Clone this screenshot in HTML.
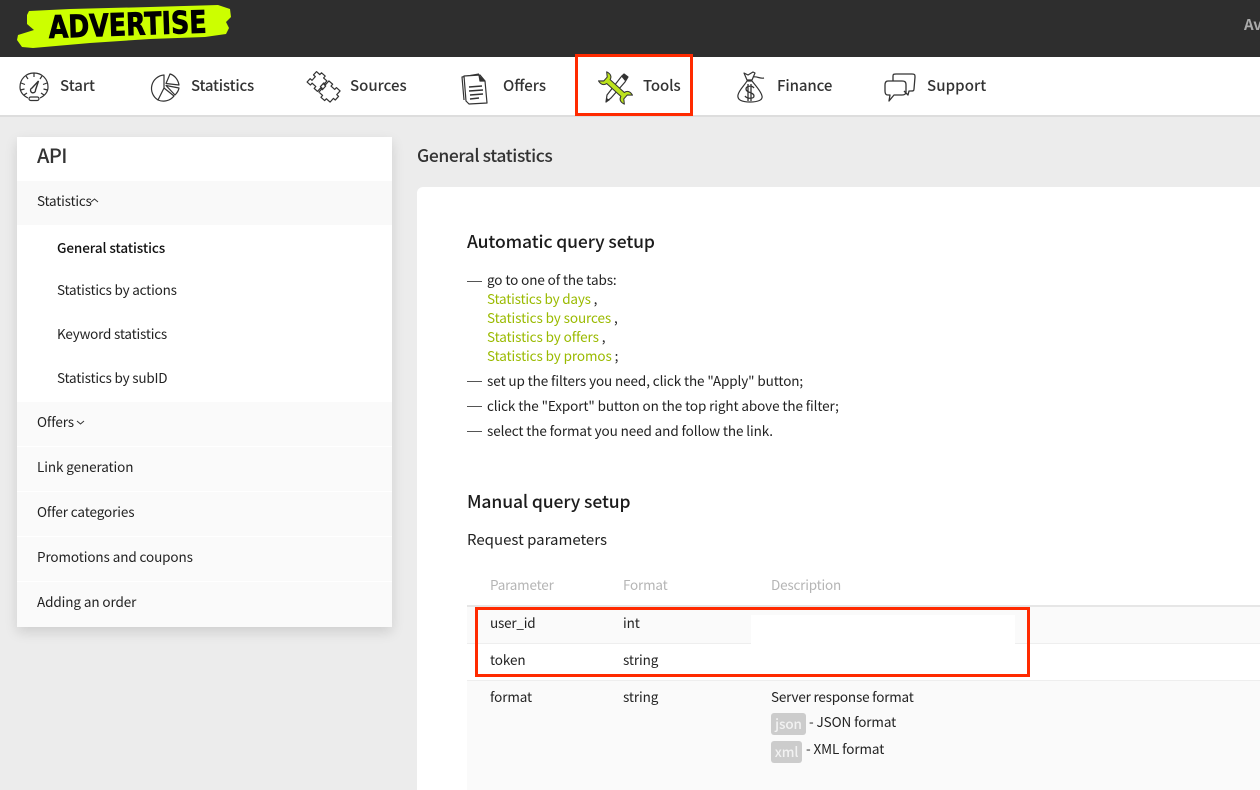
<!DOCTYPE html>
<html><head><meta charset="utf-8"><style>
html,body{margin:0;padding:0;width:1260px;height:790px;overflow:hidden;background:#ececec}
body{position:relative;font-family:"Noto Sans CJK JP","Liberation Sans",sans-serif;font-size:13.5px;letter-spacing:-.1px;color:#222}
.a{position:absolute}
.t{position:absolute;white-space:nowrap;line-height:20px;height:20px;margin-top:-1px}
.n{font-size:15px;font-weight:500;color:#333;letter-spacing:0;margin-top:0}
.g{color:#9aba00}
.h{color:#b5b5b5;letter-spacing:-.2px}
.b{font-weight:500}
.s{letter-spacing:-.2px}
.m{font-size:17.5px;letter-spacing:-.1px;color:#1c1c1c;margin-top:0}
.k{position:absolute;background:#ccc;border-radius:3px;color:#f2f2f2;font-weight:500;text-align:center;line-height:20px;height:22px}
svg{position:absolute;overflow:visible}
</style></head><body>
<div class="a" style="left:0;top:0;width:1260px;height:57px;background:#2e2e2e"></div>
<svg style="left:0;top:0" width="240" height="56" viewBox="0 0 240 56"><path d="M29 11 L70 9 L150 7 L218 5 L230 9 L231 17 L226 22 L229 28 L226 34 L205 37 L150 39 L90 43 L33 48 L22 47 L17 40 L18 35 L34 30 L27 24 L27 15 Z" fill="#ccff00"/><text x="49" y="38" font-family="'DejaVu Sans','Liberation Sans',sans-serif" font-weight="700" font-size="31" fill="#000" stroke="#000" stroke-width=".8" letter-spacing="0" textLength="158" lengthAdjust="spacingAndGlyphs" transform="rotate(-2 49 38)">ADVERTISE</text></svg>
<div class="t" style="left:1244px;top:16px;color:#aaa;font-weight:700;font-size:15px">Av</div>

<div class="a" style="left:0;top:57px;width:1260px;height:58px;background:#fff"></div>
<div class="a" style="left:0;top:115px;width:1260px;height:2px;background:#ddd"></div>

<svg style="left:19px;top:72px" width="30" height="30" viewBox="0 0 30 30" fill="none" stroke="#333" stroke-width="1.2"><path d="M9 26 C3 23 1 19 1 15 C1 7 7 1 15 1 C23 1 29 7 29 15 C29 19 27 23 21 26"/><rect x="10" y="25" width="10" height="3.5" rx="1.7"/><path d="M15 1v4M7 4l2 3M23 4l-2 3M2 11l4 1.5M28 11l-4 1.500M1.500 18l4-1M28.500 18l-4-1M5 23l3-2M25 23l-3-2"/><path d="M19.500 9 L16.500 18 A2.500 2.500 0 1 1 13 16 Z" stroke-width="1.400"/></svg>
<div class="t n" style="left:60px;top:76px">Start</div>

<svg style="left:150px;top:73px" width="30" height="29" viewBox="0 0 30 29" fill="none" stroke="#333" stroke-width="1.200" stroke-linejoin="round"><path d="M14 2 A13.500 13.500 0 0 0 8 27 L14 15 Z"/><path d="M8 27 A13.500 13.500 0 0 0 24 23 L14 15"/><path d="M16 13.500 L29 16 C28.500 19 27 21 25 23 Z" transform="translate(0 -1)"/><path d="M20 1 C24 2 28 6 29 12 L16 10.500 Z"/></svg>
<div class="t n" style="left:191px;top:76px;letter-spacing:-.2px">Statistics</div>

<svg style="left:306px;top:71px" width="34" height="32" viewBox="0 0 34 32" fill="none" stroke="#333" stroke-width="1.200" stroke-linejoin="round"><path transform="translate(11 10.500) rotate(42) translate(-7 -7)" d="M0 0 H4.500 V-2.500 H9.500 V0 H14 V4.500 H16.500 V9.500 H14 V14 H9.500 V11.500 H4.500 V14 H0 V9.500 H2.500 V4.500 H0 Z"/><path transform="translate(23.500 20.500) rotate(42) translate(-7.500 -7.500)" d="M0 0 H5 V2.500 H10 V0 H15 V5 H17.500 V10 H15 V15 H10 V17.500 H5 V15 H0 V10 H-2.500 V5 H0 Z"/></svg>
<div class="t n" style="left:350px;top:76px">Sources</div>

<svg style="left:461px;top:72px" width="28" height="33" viewBox="0 0 28 33" fill="none" stroke="#333" stroke-width="1.200" stroke-linejoin="round"><path d="M3 28 L1 5 L18 2"/><path d="M5 29 L3 4 L19 3 L24 9 L26 31 L8 32 Z" fill="#fff"/><path d="M18 3 L19 9 L24 9" fill="#333"/><path d="M8 15 L21 14M8 19 L22 18M9 23 L22 22M9 27 L18 26" stroke-width="1.400"/></svg>
<div class="t n" style="left:503px;top:76px">Offers</div>

<svg style="left:599px;top:72px" width="33" height="32" viewBox="0 0 33 32" stroke-linejoin="round"><path d="M22 5 L25 2 L29 5 L26 10 L12 26 L7 30 L8 23 Z" fill="#fff" stroke="#333" stroke-width="1.200"/><path d="M22 4 L25 1.500 L29 5 L26 9 Z" fill="#333"/><path d="M7 30.500 L7.500 26 L11 28 Z" fill="#333"/><path transform="translate(16.500 16) rotate(42) scale(.87)" d="M-11 -3 L11 -3 C12 -7 15 -8.500 20 -7 L15.500 -3 L15.500 3 L20 7 C15 8.500 12 7 11 3 L-11 3 C-12 7 -15 8.500 -20 7 L-15.500 3 L-15.500 -3 L-20 -7 C-15 -8.500 -12 -7 -11 -3 Z" fill="#bce21d" stroke="#333" stroke-width="1.200"/></svg>
<div class="t n" style="left:643px;top:76px;letter-spacing:-.1px">Tools</div>

<svg style="left:736px;top:70px" width="30" height="33" viewBox="0 0 30 33" fill="none" stroke="#333" stroke-width="1.200" stroke-linejoin="round"><path d="M8 3 L12 5 L17 2 L19 3 L16 10 L11 10 Z"/><path d="M17 7 C21 6 24 9 28 8"/><path d="M11 11 L16 11 C19 15 25 21 26 26 C27 30 22 32 14 32 C6 32 1 30 2 25 C3 20 8 16 11 11 Z"/><path d="M18 18 C16 15 10 16 10 19 C10 23 18 22 18 26 C18 29 11 29 9 26M12 14 V31M15 14 V31" stroke-width="1.300"/></svg>
<div class="t n" style="left:777px;top:76px;letter-spacing:-.1px">Finance</div>

<svg style="left:884px;top:73px" width="32" height="30" viewBox="0 0 32 30" fill="none" stroke="#333" stroke-width="1.300" stroke-linejoin="round"><path d="M9 8 L9 3 C9 1 10 1 12 1 L28 1 C31 1 31 2 31 4 L30 16 C30 18 29 18 27 18 L25 18 L24 22 L20 18"/><path d="M4 8 L18 8 C21 8 22 9 22 12 L22 19 C22 21 21 22 18 22 L10 22 L5 28 L6 22 L4 22 C2 22 1 21 1 18 L1 12 C1 9 2 8 4 8 Z"/></svg>
<div class="t n" style="left:927px;top:76px;letter-spacing:.1px">Support</div>

<div class="a" style="left:575px;top:54px;width:112px;height:56px;border:3px solid #ff2a00"></div>

<!-- sidebar -->
<div class="a" style="left:17px;top:137px;width:375px;height:490px;background:#fff;box-shadow:0 5px 12px rgba(0,0,0,.13)"></div>
<div class="a" style="left:17px;top:181px;width:375px;height:44px;background:#f9f9f9"></div>
<div class="a" style="left:17px;top:402px;width:375px;height:225px;background:#fafafa"></div>
<div class="a" style="left:17px;top:446px;width:375px;height:1px;background:#fff"></div>
<div class="a" style="left:17px;top:491px;width:375px;height:1px;background:#fff"></div>
<div class="a" style="left:17px;top:536px;width:375px;height:1px;background:#fff"></div>
<div class="a" style="left:17px;top:581px;width:375px;height:1px;background:#fff"></div>
<div class="t b" style="left:37px;top:146px;font-size:20px;color:#333;letter-spacing:-.6px">API</div>
<div class="t s" style="left:37px;top:191px">Statistics</div>
<svg style="left:90px;top:198px" width="9" height="5" fill="none" stroke="#333"><path d="M1 4 L4.500 1 L8 4"/></svg>
<div class="t b" style="left:57px;top:238px;color:#111">General statistics</div>
<div class="t s" style="left:57px;top:280px">Statistics by actions</div>
<div class="t s" style="left:57px;top:324px">Keyword statistics</div>
<div class="t s" style="left:57px;top:368px">Statistics by subID</div>
<div class="t" style="left:37px;top:412px">Offers</div>
<svg style="left:76px;top:420px" width="9" height="5" fill="none" stroke="#333"><path d="M1 1 L4.500 4 L8 1"/></svg>
<div class="t" style="left:37px;top:457px">Link generation</div>
<div class="t" style="left:37px;top:502px">Offer categories</div>
<div class="t" style="left:37px;top:547px">Promotions and coupons</div>
<div class="t" style="left:37px;top:592px">Adding an order</div>

<!-- main -->
<div class="t b" style="left:417px;top:147px;font-size:17.5px;letter-spacing:-.4px;color:#333">General statistics</div>
<div class="a" style="left:417px;top:187px;width:860px;height:620px;background:#fff;border-radius:6px"></div>
<div class="t b m" style="left:467px;top:232px">Automatic query setup</div>
<div class="a" style="left:467px;top:281px;width:15px;height:1px;background:#555"></div>
<div class="t" style="left:487px;top:270px">go to one of the tabs:</div>
<div class="t s" style="left:487px;top:289px"><span class="g">Statistics by days</span> ,</div>
<div class="t" style="left:487px;top:308px"><span class="g">Statistics by sources</span> ,</div>
<div class="t" style="left:487px;top:327px"><span class="g">Statistics by offers</span> ,</div>
<div class="t" style="left:487px;top:346px"><span class="g">Statistics by promos</span> ;</div>
<div class="a" style="left:467px;top:381px;width:15px;height:1px;background:#555"></div>
<div class="t" style="left:487px;top:371px">set up the filters you need, click the "Apply" button;</div>
<div class="a" style="left:467px;top:406px;width:15px;height:1px;background:#555"></div>
<div class="t" style="left:487px;top:396px">click the "Export" button on the top right above the filter;</div>
<div class="a" style="left:467px;top:431px;width:15px;height:1px;background:#555"></div>
<div class="t" style="left:487px;top:421px">select the format you need and follow the link.</div>

<div class="t b m" style="left:467px;top:492px">Manual query setup</div>
<div class="t" style="left:467px;top:531px;font-size:15px;letter-spacing:0">Request parameters</div>
<div class="t h" style="left:490px;top:575px">Parameter</div>
<div class="t h" style="left:623px;top:575px">Format</div>
<div class="t h" style="left:771px;top:575px">Description</div>
<div class="a" style="left:467px;top:605px;width:793px;height:2px;background:#e6e6e6"></div>
<div class="a" style="left:467px;top:607px;width:793px;height:36px;background:#fafafa"></div>
<div class="a" style="left:467px;top:643px;width:793px;height:1px;background:#eee"></div>
<div class="a" style="left:467px;top:680px;width:793px;height:1px;background:#eee"></div>
<div class="a" style="left:467px;top:681px;width:793px;height:109px;background:#fafafa"></div>
<div class="a" style="left:751px;top:615px;width:264px;height:30px;background:#fff"></div>
<div class="t s" style="left:490px;top:613px">user_id</div>
<div class="t" style="left:623px;top:613px">int</div>
<div class="t" style="left:490px;top:650px">token</div>
<div class="t" style="left:623px;top:650px">string</div>
<div class="t" style="left:490px;top:687px">format</div>
<div class="t" style="left:623px;top:687px">string</div>
<div class="t s" style="left:771px;top:687px">Server response format</div>
<div class="k" style="left:771px;top:713px;width:35px">json</div>
<div class="t" style="left:809px;top:712px">- JSON format</div>
<div class="k" style="left:771px;top:741px;width:31px">xml</div>
<div class="t" style="left:806px;top:739px">- XML format</div>
<div class="a" style="left:475px;top:607px;width:549px;height:64px;border:3px solid #ff2a00"></div>
</body></html>
